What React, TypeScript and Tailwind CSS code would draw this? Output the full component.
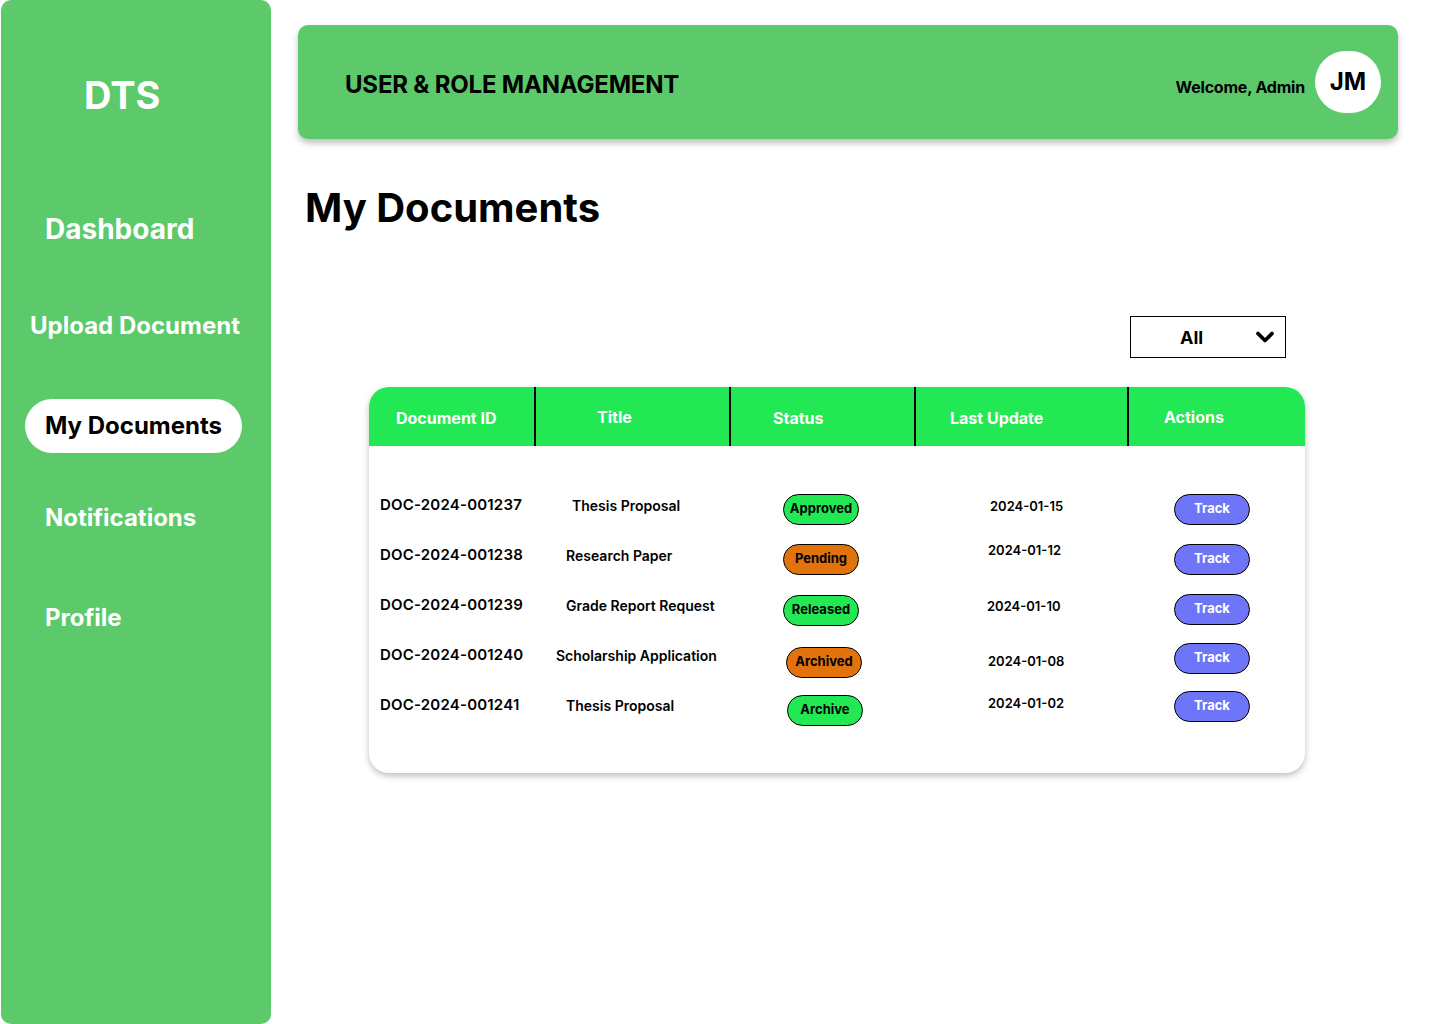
import { ChevronDown } from "lucide-react"

const navItems = [
  { label: "Dashboard", cls: "pl-[44px] text-[28px] mt-[94px]" },
  { label: "Upload Document", cls: "pl-[29px] text-[24px] mt-[63px]" },
]

const rows = [
  { id: "DOC-2024-001237", title: "Thesis Proposal", titleCls: "pl-[16px]", status: "Approved", tone: "green", pillCls: "pl-0 mt-[8px]", date: "2024-01-15", dateCls: "pl-[3px] mt-[4px]", trackCls: "mt-[8px]" },
  { id: "DOC-2024-001238", title: "Research Paper", titleCls: "pl-[10px]", status: "Pending", tone: "orange", pillCls: "pl-0 mt-[8px]", date: "2024-01-12", dateCls: "pl-[1px] -mt-[8px]", trackCls: "mt-[8px]" },
  { id: "DOC-2024-001239", title: "Grade Report Request", titleCls: "pl-[10px]", status: "Released", tone: "green", pillCls: "pl-0 mt-[10px]", date: "2024-01-10", dateCls: "pl-0 mt-[4px]", trackCls: "mt-[8px]" },
  { id: "DOC-2024-001240", title: "Scholarship Application", titleCls: "pl-0", status: "Archived", tone: "orange", pillCls: "pl-[3px] mt-[14px]", date: "2024-01-08", dateCls: "pl-[1px] mt-[14px]", trackCls: "mt-[6px]" },
  { id: "DOC-2024-001241", title: "Thesis Proposal", titleCls: "pl-[10px]", status: "Archive", tone: "green", pillCls: "pl-[4px] mt-[10px]", date: "2024-01-02", dateCls: "pl-[1px] -mt-[2px]", trackCls: "mt-[2px]" },
]

export default function App() {
  return (
    <div className="flex h-[1024px] w-[1440px] bg-white font-['Inter','Liberation_Sans',sans-serif] text-black">
      {/* sidebar */}
      <aside className="ml-px flex h-[1024px] w-[270px] shrink-0 flex-col rounded-[10px] bg-[#5cc96b] text-white">
        <div className="mt-[72px] pl-[83px] text-[38px] font-bold leading-[46px]">DTS</div>
        {navItems.map((n) => (
          <div key={n.label} className={`${n.cls} font-bold leading-[34px]`}>
            {n.label}
          </div>
        ))}
        <div className="ml-[24px] mt-[56px] flex h-[54px] w-[217px] items-center rounded-full bg-white pl-[20px] text-[24px] font-bold text-black">
          My Documents
        </div>
        <div className="mt-[48px] pl-[44px] text-[24px] font-bold leading-[34px]">Notifications</div>
        <div className="mt-[66px] pl-[44px] text-[24px] font-bold leading-[34px]">Profile</div>
      </aside>

      {/* main */}
      <main className="flex flex-1 flex-col pl-[27px]">
        <header className="mt-[25px] flex h-[114px] w-[1100px] items-center justify-between rounded-[10px] bg-[#5cc96b] pl-[47px] pr-[17px] shadow-[0_4px_6px_rgba(0,0,0,0.25)]">
          <h1 className="mt-[6px] text-[24px] font-bold tracking-[-0.2px]">USER &amp; ROLE MANAGEMENT</h1>
          <div className="flex items-center gap-[10px]">
            <span className="mt-[10px] text-[16px] font-bold tracking-[-0.2px]">Welcome, Admin</span>
            <div className="flex h-[62px] w-[66px] items-center justify-center rounded-full bg-white text-[24px] font-bold">
              JM
            </div>
          </div>
        </header>

        <h2 className="ml-[7px] mt-[44px] text-[40px] font-bold leading-[50px]">My Documents</h2>

        <div className="ml-[832px] mt-[83px] flex h-[42px] w-[156px] items-center justify-between border border-black pl-[49px] pr-[6px]">
          <span className="text-[18px] font-bold">All</span>
          <ChevronDown className="h-7 w-7" strokeWidth={3.2} />
        </div>

        <section className="ml-[71px] mt-[29px] h-[386px] w-[936px] overflow-hidden rounded-[20px] bg-white shadow-[0_3px_6px_rgba(0,0,0,0.25)]">
          <div className="flex h-[59px] bg-[#22e854] text-[16px] font-bold text-white">
            <div className="flex w-[167px] items-center border-r-2 border-black pl-[27px] pt-[2px]">Document ID</div>
            <div className="flex w-[195px] items-center border-r-2 border-black pl-[61px]">Title</div>
            <div className="flex w-[185px] items-center border-r-2 border-black pl-[42px] pt-[2px]">Status</div>
            <div className="flex w-[213px] items-center border-r-2 border-black pl-[34px] pt-[2px]">Last Update</div>
            <div className="flex flex-1 items-center pl-[35px]">Actions</div>
          </div>

          <div className="pt-[34px]">
            {rows.map((r) => (
              <div key={r.id} className="flex h-[50px] items-center pl-[11px] text-[14px] font-semibold">
                <div className="w-[176px] text-[15px] tracking-[0.2px]">{r.id}</div>
                <div className={`w-[227px] ${r.titleCls}`}>{r.title}</div>
                <div className={`w-[204px] ${r.pillCls}`}>
                  <span
                    className={`inline-flex h-[31px] w-[76px] items-center justify-center rounded-full border border-black text-[13px] font-bold ${
                      r.tone === "green" ? "bg-[#22e854]" : "bg-[#e2720c]"
                    }`}
                  >
                    {r.status}
                  </span>
                </div>
                <div className={`w-[187px] text-[13px] ${r.dateCls}`}>{r.date}</div>
                <button
                  className={`flex h-[31px] w-[76px] items-center justify-center rounded-full border border-black bg-[#6e75f8] text-[13px] font-bold text-white ${r.trackCls}`}
                >
                  Track
                </button>
              </div>
            ))}
          </div>
        </section>
      </main>
    </div>
  )
}
